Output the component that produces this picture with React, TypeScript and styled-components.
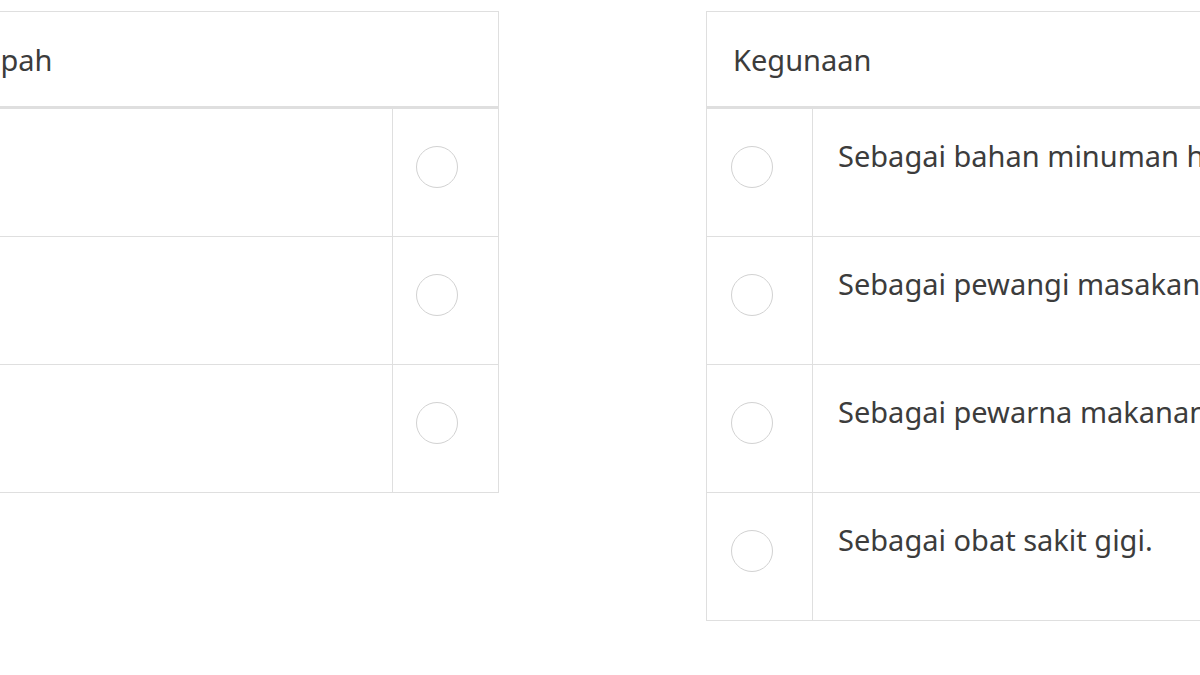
import React from "react";
import styled, { createGlobalStyle } from "styled-components";

const Global = createGlobalStyle`
  html, body { margin: 0; padding: 0; background: #fff; }
  body { font-family: "Noto Sans", "Open Sans", sans-serif; color: #3c3c3c; overflow: hidden; }
`;

const Page = styled.div`
  width: 1200px;
  height: 675px;
  overflow: hidden;
`;

const Stage = styled.div`
  display: flex;
  align-items: flex-start;
  gap: 207px;
  margin-left: -88px;
  padding-top: 11px;
  width: 1600px;
`;

const Table = styled.div`
  width: 585px;
  flex: none;
  border: 1px solid #dfdfdf;
  background: #fff;
`;

const Header = styled.div`
  height: 97px;
  box-sizing: border-box;
  padding: 1px 26px 0;
  display: flex;
  align-items: center;
  font-size: 29px;
  color: #3c3c3c;
  border-bottom: 3px solid #dfdfdf;
  white-space: nowrap;
`;

const Row = styled.div<{ $side: "left" | "right" }>`
  display: grid;
  grid-template-columns: ${(p) => (p.$side === "left" ? "1fr 106px" : "106px 1fr")};
  height: 127px;
  & + & { border-top: 1px solid #dfdfdf; }
`;

const RadioCell = styled.div<{ $side: "left" | "right" }>`
  ${(p) => (p.$side === "left" ? "border-left: 1px solid #dfdfdf;" : "border-right: 1px solid #dfdfdf;")}
  padding: 37px 0 0 ${(p) => (p.$side === "left" ? "23px" : "24px")};
  box-sizing: border-box;
`;

const Radio = styled.span`
  display: block;
  width: 42px;
  height: 42px;
  box-sizing: border-box;
  border-radius: 50%;
  border: 1.5px solid #d2d2d2;
`;

const TextCell = styled.div`
  padding: 27px 25px 0;
  font-size: 29px;
  line-height: 40px;
  color: #3c3c3c;
  white-space: nowrap;
`;

const rightRows = [
  "Sebagai bahan minuman hangat.",
  "Sebagai pewangi masakan.",
  "Sebagai pewarna makanan.",
  "Sebagai obat sakit gigi.",
];

export default function App() {
  return (
    <Page>
      <Global />
      <Stage>
        <Table>
          <Header>Rempah</Header>
          {[0, 1, 2].map((i) => (
            <Row $side="left" key={i}>
              <TextCell />
              <RadioCell $side="left">
                <Radio />
              </RadioCell>
            </Row>
          ))}
        </Table>
        <Table>
          <Header>Kegunaan</Header>
          {rightRows.map((r) => (
            <Row $side="right" key={r}>
              <RadioCell $side="right">
                <Radio />
              </RadioCell>
              <TextCell>{r}</TextCell>
            </Row>
          ))}
        </Table>
      </Stage>
    </Page>
  );
}
